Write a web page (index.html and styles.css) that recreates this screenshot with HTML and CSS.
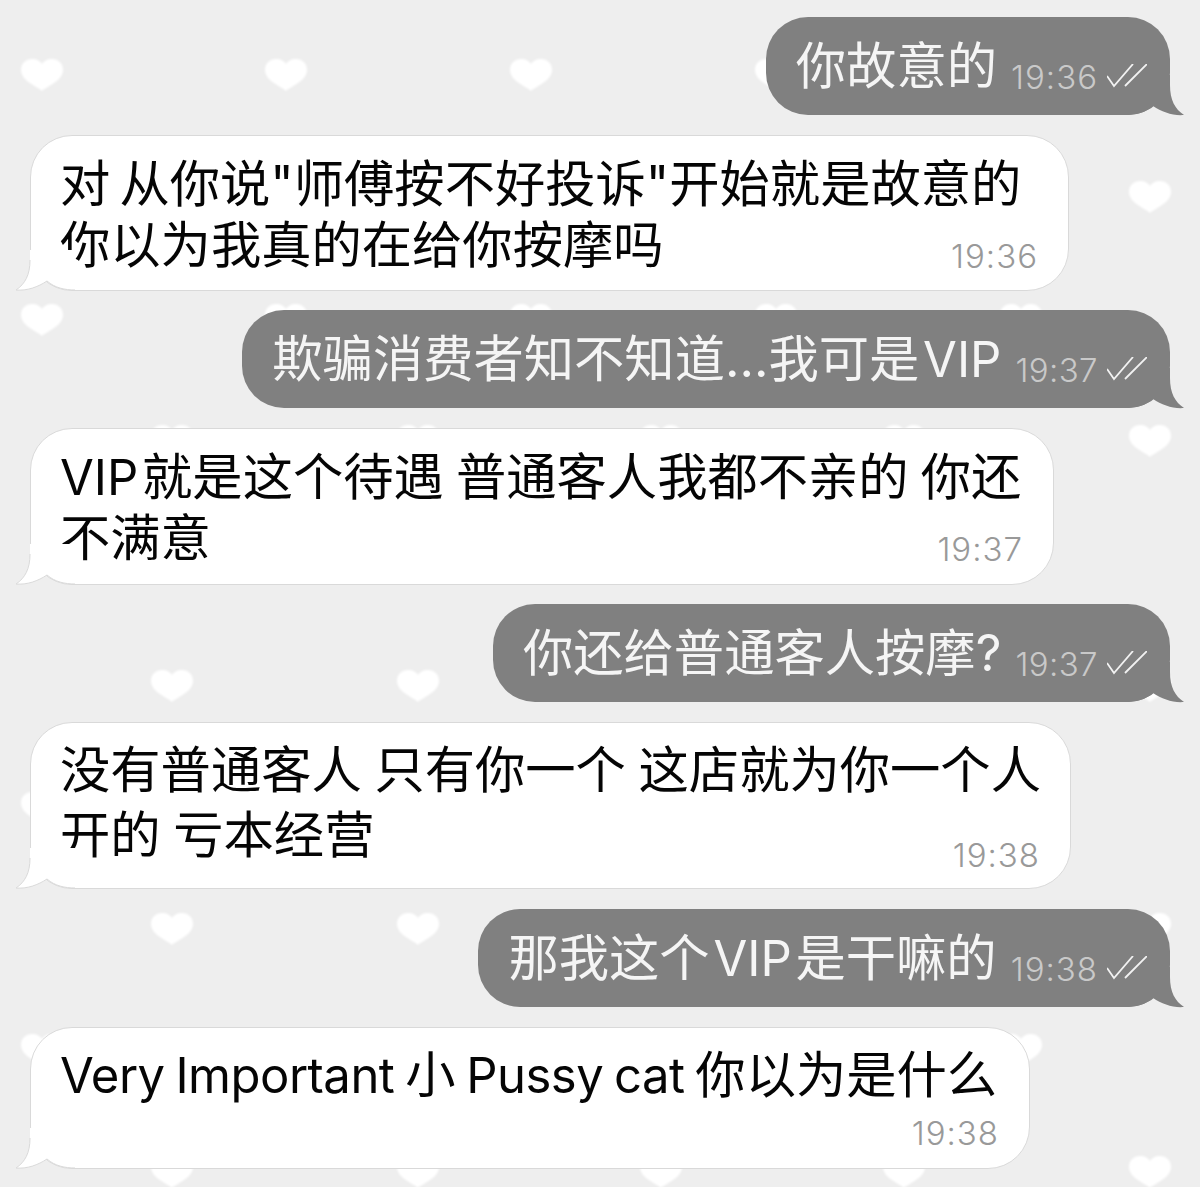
FILE: index.html
```html
<!DOCTYPE html>
<html lang="zh-CN">
<head>
<meta charset="utf-8">
<title>Chat</title>
<link rel="stylesheet" href="styles.css">
</head>
<body>
<div class="screen">
  <svg class="wall" width="1200" height="1187" viewBox="0 0 1200 1187" aria-hidden="true">
    <defs><path id="h" d="M0 16 C-5 11 -21 6 -21 -5 C-21 -12 -16 -16 -10 -16 C-5 -16 -2 -14 0 -11 C2 -14 5 -16 10 -16 C16 -16 21 -12 21 -5 C21 6 5 11 0 16Z"/></defs>
    <g class="hearts">
      <use href="#h" x="42" y="75"/><use href="#h" x="286" y="75"/><use href="#h" x="531" y="75"/><use href="#h" x="776" y="75"/>
      <use href="#h" x="1150" y="197"/>
      <use href="#h" x="42" y="320"/><use href="#h" x="286" y="320"/><use href="#h" x="531" y="320"/><use href="#h" x="776" y="320"/><use href="#h" x="1021" y="320"/>
      <use href="#h" x="172" y="441"/><use href="#h" x="418" y="441"/><use href="#h" x="661" y="441"/><use href="#h" x="904" y="441"/><use href="#h" x="1150" y="441"/>
      <use href="#h" x="172" y="686"/><use href="#h" x="418" y="686"/><use href="#h" x="1150" y="686"/>
      <use href="#h" x="42" y="808"/>
      <use href="#h" x="172" y="929"/><use href="#h" x="418" y="929"/><use href="#h" x="1150" y="929"/>
      <use href="#h" x="42" y="1050"/><use href="#h" x="1021" y="1050"/>
      <use href="#h" x="172" y="1172"/><use href="#h" x="418" y="1172"/><use href="#h" x="661" y="1172"/><use href="#h" x="904" y="1172"/><use href="#h" x="1150" y="1172"/>
    </g>
  </svg>
  <main class="chat">
    <div class="bubble out g0">
      <span class="text">你故意的</span><span class="time">19:36</span>
      <svg class="ticks" width="40" height="24" viewBox="0 0 40 24"><path d="M0 12 L7 22 L26 0 M18 22 L40 0"/></svg>
      <svg class="tail" width="60" height="45" viewBox="-15 -44 60 45"><path d="M0 -40 L0 -30 C0 -15 -5 -6 -14 0 C-3 1 8 -3 17 -9 C25 -2 35 0 45 0 L45 -40Z"/></svg>
    </div>
    <div class="bubble in b2">
      <p class="text">对 从你说"师傅按不好投诉"开始就是故意的<br>你以为我真的在给你按摩吗</p>
      <div class="time">19:36</div>
      <svg class="tail" width="60" height="45" viewBox="-15 -44 60 45"><path d="M0 -40 L0 -30 C0 -15 -5 -6 -14 0 C-3 1 8 -3 17 -9 C25 -2 35 0 45 0 L45 -40Z"/><path class="edge" d="M0 -30 C0 -15 -5 -6 -14 0 C-3 1 8 -3 17 -9 C25 -2 35 0 45 0"/></svg>
    </div>
    <div class="bubble out g1">
      <span class="text">欺骗消费者知不知道...我可是<span class="vip"> VIP</span></span><span class="time">19:37</span>
      <svg class="ticks" width="40" height="24" viewBox="0 0 40 24"><path d="M0 12 L7 22 L26 0 M18 22 L40 0"/></svg>
      <svg class="tail" width="60" height="45" viewBox="-15 -44 60 45"><path d="M0 -40 L0 -30 C0 -15 -5 -6 -14 0 C-3 1 8 -3 17 -9 C25 -2 35 0 45 0 L45 -40Z"/></svg>
    </div>
    <div class="bubble in b4">
      <p class="text"><span class="vip">VIP </span>就是这个待遇 普通客人我都不亲的 你还<br>不满意</p>
      <div class="time">19:37</div>
      <svg class="tail" width="60" height="45" viewBox="-15 -44 60 45"><path d="M0 -40 L0 -30 C0 -15 -5 -6 -14 0 C-3 1 8 -3 17 -9 C25 -2 35 0 45 0 L45 -40Z"/><path class="edge" d="M0 -30 C0 -15 -5 -6 -14 0 C-3 1 8 -3 17 -9 C25 -2 35 0 45 0"/></svg>
    </div>
    <div class="bubble out g2">
      <span class="text">你还给普通客人按摩?</span><span class="time">19:37</span>
      <svg class="ticks" width="40" height="24" viewBox="0 0 40 24"><path d="M0 12 L7 22 L26 0 M18 22 L40 0"/></svg>
      <svg class="tail" width="60" height="45" viewBox="-15 -44 60 45"><path d="M0 -40 L0 -30 C0 -15 -5 -6 -14 0 C-3 1 8 -3 17 -9 C25 -2 35 0 45 0 L45 -40Z"/></svg>
    </div>
    <div class="bubble in b6">
      <p class="text">没有普通客人 只有你一个 这店就为你一个人<br>开的 亏本经营</p>
      <div class="time">19:38</div>
      <svg class="tail" width="60" height="45" viewBox="-15 -44 60 45"><path d="M0 -40 L0 -30 C0 -15 -5 -6 -14 0 C-3 1 8 -3 17 -9 C25 -2 35 0 45 0 L45 -40Z"/><path class="edge" d="M0 -30 C0 -15 -5 -6 -14 0 C-3 1 8 -3 17 -9 C25 -2 35 0 45 0"/></svg>
    </div>
    <div class="bubble out g3">
      <span class="text">那我这个<span class="vip"> VIP </span>是干嘛的</span><span class="time">19:38</span>
      <svg class="ticks" width="40" height="24" viewBox="0 0 40 24"><path d="M0 12 L7 22 L26 0 M18 22 L40 0"/></svg>
      <svg class="tail" width="60" height="45" viewBox="-15 -44 60 45"><path d="M0 -40 L0 -30 C0 -15 -5 -6 -14 0 C-3 1 8 -3 17 -9 C25 -2 35 0 45 0 L45 -40Z"/></svg>
    </div>
    <div class="bubble in b8">
      <p class="text"><span class="lat">Very Important </span>小<span class="lat"> Pussy cat </span>你以为是什么</p>
      <div class="time">19:38</div>
      <svg class="tail" width="60" height="45" viewBox="-15 -44 60 45"><path d="M0 -40 L0 -30 C0 -15 -5 -6 -14 0 C-3 1 8 -3 17 -9 C25 -2 35 0 45 0 L45 -40Z"/><path class="edge" d="M0 -30 C0 -15 -5 -6 -14 0 C-3 1 8 -3 17 -9 C25 -2 35 0 45 0"/></svg>
    </div>
  </main>
</div>
</body>
</html>
```
FILE: styles.css
```css
* { box-sizing: border-box; }
html, body { margin: 0; padding: 0; }
body { background: #eeeeee; font-family: Inter, "Noto Sans CJK SC", sans-serif; }
.screen { position: relative; width: 1200px; height: 1187px; overflow: hidden; }
.wall { position: absolute; inset: 0; }
.hearts { fill: #ffffff; filter: blur(1px); }
.chat { position: relative; display: flex; flex-direction: column; padding: 17px 30px 0; }
.bubble { position: relative; font-size: 50.3px; border-radius: 42px; }
.text { margin: 0; white-space: nowrap; }
.tail { position: absolute; display: block; overflow: visible; }
.vip { font-size: 49px; word-spacing: -10px; }
.lat { font-size: 49px; letter-spacing: -0.5px; word-spacing: -2.5px; }

.out { align-self: flex-end; display: flex; height: 98px; margin-top: 20px; padding: 18px 23px 19px 30px; background: #808080; color: #f5f5f5; }
.out .text { line-height: 61px; }
.out .time { align-self: flex-end; margin-left: 14px; font-size: 33px; letter-spacing: 1px; line-height: 38px; color: #c9c9c9; font-weight: 300; }
.out .ticks { position: relative; z-index: 1; align-self: flex-end; margin: 0 0 8px 9px; fill: none; stroke: #f2f2f2; stroke-width: 1.8; }
.out .tail { right: -15px; bottom: -1px; transform: scaleX(-1); fill: #808080; }
.g0 { margin-top: 0; }
.g1 .time, .g2 .time { letter-spacing: 0.4px; }

.in { align-self: flex-start; background: #ffffff; border: 1px solid #d9d9d9; margin-top: 20px; padding: var(--pt) 30px var(--pb) 29px; color: #050505; }
.in .text { line-height: var(--lh); }
.in .time { margin-top: var(--mt); font-size: 33px; letter-spacing: 1px; line-height: 38px; color: #999999; font-weight: 350; text-align: right; }
.in .tail { left: -16px; bottom: -1px; fill: #ffffff; }
.in .tail .edge { fill: none; stroke: #d9d9d9; stroke-width: 1; }

.b2 { width: 1039px; height: 156px; word-spacing: -5px; --lh: 61px; --pt: 17px; --pb: 15px; --mt: -38px; }
.g1 { margin-top: 19px; }
.b4 { width: 1024px; height: 157px; word-spacing: -2px; --lh: 60px; --pt: 18px; --pb: 16px; --mt: -38px; }
.g2 { margin-top: 19px; }
.b6 { width: 1041px; height: 167px; word-spacing: -1.5px; --lh: 65px; --pt: 14px; --pb: 14px; --mt: -31px; }
.b8 { width: 1000px; height: 142px; --lh: 61px; --pt: 16px; --pb: 16px; --mt: 8px; }
```
